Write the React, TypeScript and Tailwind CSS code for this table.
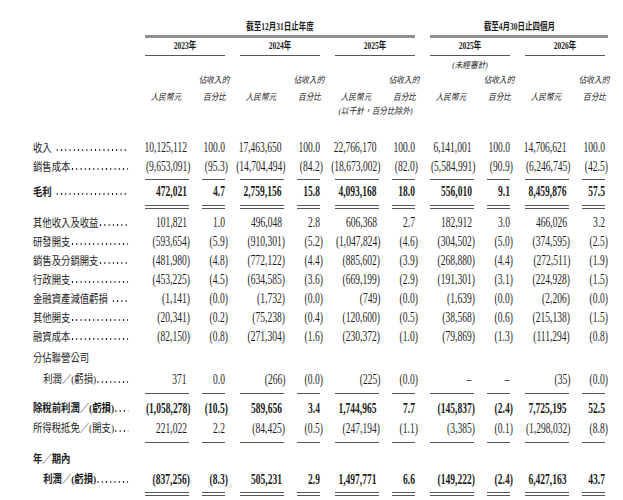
import React from 'react';

type Row = {
  label: string;
  values?: string[];
  bold?: boolean;
  indent?: boolean;
  dots?: boolean;
  gap?: boolean;
  h?: string;
};

const groups = [0, 1, 2, 3, 4];

const Num: React.FC<{ v: string; bold?: boolean }> = ({ v, bold }) => {
  const paren = v.endsWith(')');
  return (
    <div className="flex justify-end">
      <span
        className={`inline-block shrink-0 origin-right scale-x-[0.68] whitespace-nowrap text-[14px] leading-none ${
          bold ? 'font-bold' : ''
        }`}
      >
        {v}
        {!paren && <span className="invisible">)</span>}
      </span>
    </div>
  );
};

const Label: React.FC<{ row: Row }> = ({ row }) => (
  <div className="ml-[33px] w-[112px] shrink-0">
    <div
      className={`flex w-[112px] origin-left scale-x-[0.85] items-baseline text-[11px] leading-none ${
        row.bold ? 'font-bold' : ''
      } ${row.indent ? 'pl-[12px]' : ''}`}
    >
      <span className={`shrink-0 whitespace-nowrap ${row.gap ? 'mr-[4px]' : ''}`}>{row.label}</span>
      {row.dots && (
        <div className="h-[2.4px] min-w-0 flex-1 bg-[radial-gradient(circle,#1c1c1c_0.85px,transparent_1.2px)] bg-[length:5px_2.4px] bg-repeat-x" />
      )}
    </div>
  </div>
);

const DataRow: React.FC<{ row: Row; className?: string }> = ({ row, className = '' }) => (
  <div className={`flex items-center ${row.h ?? 'h-[19px]'} ${className}`}>
    <Label row={row} />
    {row.values && (
      <div className="flex gap-[12px]">
        {groups.map((g) => (
          <div key={g} className="flex w-[83px]">
            <div className="w-[45px]">
              <Num v={row.values![g * 2]} bold={row.bold} />
            </div>
            <div className="ml-[12px] w-[26px]">
              <Num v={row.values![g * 2 + 1]} bold={row.bold} />
            </div>
          </div>
        ))}
      </div>
    )}
  </div>
);

const Rule: React.FC<{ double?: boolean; className?: string }> = ({ double, className = '' }) => {
  const line = double ? 'h-[4px] border-y border-[#555]' : 'h-px bg-[#555]';
  return (
    <div className={`flex ${className}`}>
      <div className="w-[145px] shrink-0" />
      <div className="flex gap-[12px]">
        {groups.map((g) => (
          <div key={g} className="flex w-[83px]">
            <div className={`w-[44px] ${line}`} />
            <div className={`ml-[13px] w-[23px] ${line}`} />
          </div>
        ))}
      </div>
    </div>
  );
};

const Head: React.FC<{ children: React.ReactNode; className?: string }> = ({ children, className = '' }) => (
  <span className={`inline-block shrink-0 whitespace-nowrap leading-none ${className}`}>{children}</span>
);

const top: Row[] = [
  { label: '收入', gap: true, dots: true, values: ['10,125,112', '100.0', '17,463,650', '100.0', '22,766,170', '100.0', '6,141,001', '100.0', '14,706,621', '100.0'] },
  { label: '銷售成本', dots: true, values: ['(9,653,091)', '(95.3)', '(14,704,494)', '(84.2)', '(18,673,002)', '(82.0)', '(5,584,991)', '(90.9)', '(6,246,745)', '(42.5)'] },
];

const gross: Row = { label: '毛利', gap: true, dots: true, bold: true, values: ['472,021', '4.7', '2,759,156', '15.8', '4,093,168', '18.0', '556,010', '9.1', '8,459,876', '57.5'] };

const middle: Row[] = [
  { label: '其他收入及收益', dots: true, values: ['101,821', '1.0', '496,048', '2.8', '606,368', '2.7', '182,912', '3.0', '466,026', '3.2'] },
  { label: '研發開支', dots: true, values: ['(593,654)', '(5.9)', '(910,301)', '(5.2)', '(1,047,824)', '(4.6)', '(304,502)', '(5.0)', '(374,595)', '(2.5)'] },
  { label: '銷售及分銷開支', dots: true, values: ['(481,980)', '(4.8)', '(772,122)', '(4.4)', '(885,602)', '(3.9)', '(268,880)', '(4.4)', '(272,511)', '(1.9)'] },
  { label: '行政開支', dots: true, values: ['(453,225)', '(4.5)', '(634,585)', '(3.6)', '(669,199)', '(2.9)', '(191,301)', '(3.1)', '(224,928)', '(1.5)'] },
  { label: '金融資產減值虧損', gap: true, dots: true, values: ['(1,141)', '(0.0)', '(1,732)', '(0.0)', '(749)', '(0.0)', '(1,639)', '(0.0)', '(2,206)', '(0.0)'] },
  { label: '其他開支', dots: true, values: ['(20,341)', '(0.2)', '(75,238)', '(0.4)', '(120,600)', '(0.5)', '(38,568)', '(0.6)', '(215,138)', '(1.5)'] },
  { label: '融資成本', dots: true, values: ['(82,150)', '(0.8)', '(271,304)', '(1.6)', '(230,372)', '(1.0)', '(79,869)', '(1.3)', '(111,294)', '(0.8)'] },
];

const associate: Row = { label: '分佔聯營公司', h: 'h-[20px]' };
const share: Row = { label: '利潤／(虧損)', indent: true, dots: true, h: 'h-[20px]', values: ['371', '0.0', '(266)', '(0.0)', '(225)', '(0.0)', '–', '–', '(35)', '(0.0)'] };

const pretax: Row = { label: '除稅前利潤／(虧損)', bold: true, dots: true, h: 'h-[20px]', values: ['(1,058,278)', '(10.5)', '589,656', '3.4', '1,744,965', '7.7', '(145,837)', '(2.4)', '7,725,195', '52.5'] };
const tax: Row = { label: '所得稅抵免／(開支)', dots: true, h: 'h-[20px]', values: ['221,022', '2.2', '(84,425)', '(0.5)', '(247,194)', '(1.1)', '(3,385)', '(0.1)', '(1,298,032)', '(8.8)'] };
const period: Row = { label: '年／期內', bold: true, h: 'h-[20px]' };
const profit: Row = { label: '利潤／(虧損)', indent: true, bold: true, dots: true, h: 'h-[20px]', values: ['(837,256)', '(8.3)', '505,231', '2.9', '1,497,771', '6.6', '(149,222)', '(2.4)', '6,427,163', '43.7'] };

export default function App() {
  return (
    <div className="h-[500px] w-[623px] overflow-hidden bg-white font-['Liberation_Serif','Noto_Sans_CJK_TC',serif] text-[#1c1c1c]">
      {/* column headings */}
      <div className="pt-[20px]">
        <div className="flex h-[14px] items-center">
          <div className="w-[145px] shrink-0" />
          <div className="flex w-[270px] justify-center">
            <Head className="scale-x-[0.75] text-[10px] font-bold">截至12月31日止年度</Head>
          </div>
          <div className="ml-[15px] flex w-[178px] justify-center">
            <Head className="scale-x-[0.75] text-[10px] font-bold">截至4月30日止四個月</Head>
          </div>
        </div>
        <div className="mt-[1px] flex">
          <div className="w-[145px] shrink-0" />
          <div className="h-[2.5px] w-[270px] bg-[#8e8e8e]" />
          <div className="ml-[15px] h-[2.5px] w-[178px] bg-[#8e8e8e]" />
        </div>
        <div className="flex h-[17px] items-center">
          <div className="w-[145px] shrink-0" />
          <div className="flex gap-[12px]">
            {['2023年', '2024年', '2025年', '2025年', '2026年'].map((y, i) => (
              <div key={i} className="flex w-[83px]">
                <div className="flex w-[80px] justify-center">
                  <Head className="scale-x-[0.75] text-[10px] font-bold">{y}</Head>
                </div>
              </div>
            ))}
          </div>
        </div>
        <div className="flex">
          <div className="w-[145px] shrink-0" />
          <div className="flex gap-[12px]">
            {groups.map((g) => (
              <div key={g} className="flex w-[83px]">
                <div className="h-px w-[80px] bg-[#555]" />
              </div>
            ))}
          </div>
        </div>
        <div className="mt-[2px] flex h-[16px] items-center">
          <div className="w-[145px] shrink-0" />
          <div className="ml-[285px] flex w-[80px] justify-center">
            <Head className="scale-x-[0.85] text-[9px] italic">(未經審計)</Head>
          </div>
        </div>
        <div className="flex h-[14px] items-center">
          <div className="w-[145px] shrink-0" />
          <div className="flex gap-[12px]">
            {groups.map((g) => (
              <div key={g} className="flex w-[83px]">
                <div className="w-[43px]" />
                <div className="ml-[14px] flex w-[24px] justify-center">
                  <Head className="scale-x-[0.85] text-[9px] italic">佔收入的</Head>
                </div>
              </div>
            ))}
          </div>
        </div>
        <div className="mt-[3px] flex h-[14px] items-center">
          <div className="w-[145px] shrink-0" />
          <div className="flex gap-[12px]">
            {groups.map((g) => (
              <div key={g} className="flex w-[83px]">
                <div className="flex w-[43px] justify-center">
                  <Head className="scale-x-[0.85] text-[9px] italic">人民幣元</Head>
                </div>
                <div className="ml-[14px] flex w-[24px] justify-center">
                  <Head className="scale-x-[0.85] text-[9px] italic">百分比</Head>
                </div>
              </div>
            ))}
          </div>
        </div>
        <div className="flex h-[14px] items-center">
          <div className="w-[145px] shrink-0" />
          <div className="ml-[190px] flex w-[80px] justify-center">
            <Head className="scale-x-[0.85] text-[9px] italic">(以千計，百分比除外)</Head>
          </div>
        </div>
      </div>

      {/* statement rows */}
      <div className="mt-[20px]">
        {top.map((r) => (
          <DataRow key={r.label} row={r} />
        ))}
        <Rule className="mt-[2px]" />
        <DataRow row={gross} className="mt-[3px]" />
        <Rule double className="mt-[3px]" />
        <div className="mt-[5px]">
          {middle.map((r) => (
            <DataRow key={r.label} row={r} />
          ))}
        </div>
        <DataRow row={associate} className="mt-[2px]" />
        <DataRow row={share} className="mt-[1px]" />
        <Rule className="mt-[3px]" />
        <DataRow row={pretax} className="mt-[5px]" />
        <DataRow row={tax} />
        <Rule className="mt-[3px]" />
        <DataRow row={period} className="mt-[7px]" />
        <DataRow row={profit} />
        <Rule double className="mt-[2px]" />
      </div>
    </div>
  );
}
